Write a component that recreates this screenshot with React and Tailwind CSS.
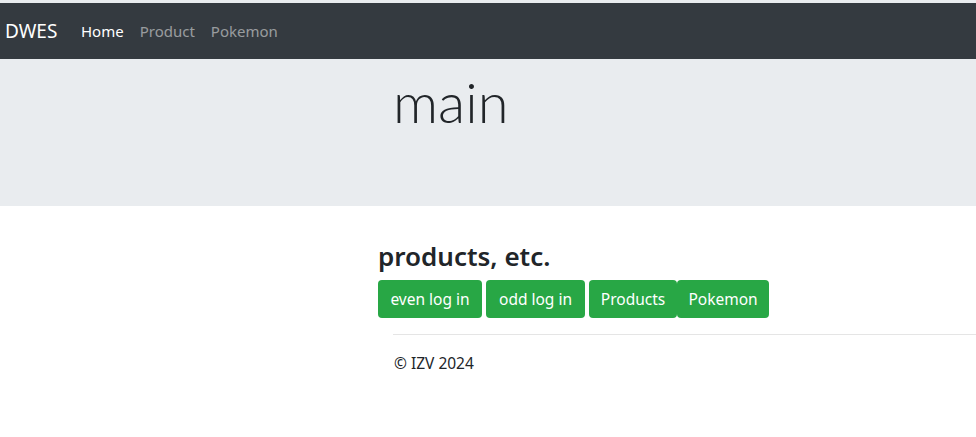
export default function App() {
  const font = { fontFamily: '"Noto Sans", Lato, sans-serif' };
  return (
    <div className="min-h-[437px] bg-white text-[#212529]" style={font}>
      <div className="h-[3px] bg-[#e9ecef]" />
      <nav className="flex h-[56px] items-center bg-[#343a40] pl-[5px]">
        <a className="w-[68px] text-[19px] leading-[30px] text-white">DWES</a>
        <a className="px-2 text-[15px] leading-6 text-white">Home</a>
        <a className="px-2 text-[15px] leading-6 text-white/50">Product</a>
        <a className="px-2 text-[15px] leading-6 text-white/50">Pokemon</a>
      </nav>
      <div className="h-[147px] bg-[#e9ecef] pl-[393px] pt-[9px]">
        <h1 className="text-[56px] font-light leading-[1.2]" style={{ fontFamily: 'Lato, sans-serif' }}>main</h1>
      </div>
      <div className="pl-[378px] pt-[36px]">
        <h4 className="mb-[9px] text-[26px] font-semibold leading-[29px]">products, etc.</h4>
        <div className="flex">
          <button className="mr-[4px] flex h-[38px] w-[104px] items-center justify-center rounded-[4px] bg-[#28a745] pt-[2px] text-[15.5px] text-white">even log in</button>
          <button className="mr-[4px] flex h-[38px] w-[99px] items-center justify-center rounded-[4px] bg-[#28a745] pt-[2px] text-[15.5px] text-white">odd log in</button>
          <button className="flex h-[38px] w-[88px] items-center justify-center rounded-[4px] bg-[#28a745] pt-[2px] text-[15.5px] text-white">Products</button>
          <button className="flex h-[38px] w-[92px] items-center justify-center rounded-[4px] bg-[#28a745] pt-[2px] text-[15.5px] text-white">Pokemon</button>
        </div>
      </div>
      <div className="ml-[393px] mt-[16px] border-t border-[#e5e5e5]" />
      <footer className="pl-[394px] pt-[16px] text-[15.5px] leading-6">© IZV 2024</footer>
    </div>
  );
}
